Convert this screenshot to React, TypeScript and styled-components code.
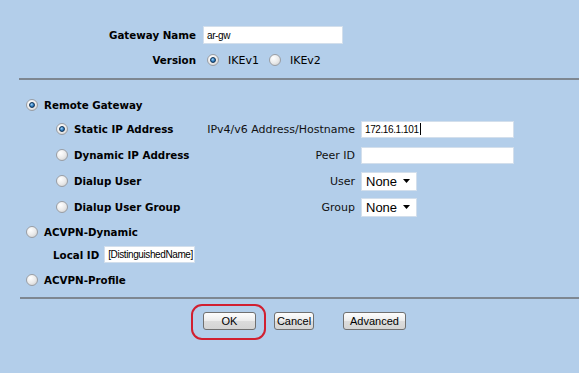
import React from 'react';
import styled, { createGlobalStyle } from 'styled-components';

const GlobalStyle = createGlobalStyle`
  body {
    margin: 0;
    background: #b3ceea;
    font-family: "DejaVu Sans", Verdana, sans-serif;
  }
`;

const Page = styled.div`
  width: 579px;
  height: 373px;
  box-sizing: border-box;
  padding-top: 26px;
  background: #b3ceea;
  color: #000;
  overflow: hidden;
`;

const HeaderGrid = styled.div`
  display: grid;
  grid-template-columns: 196px auto;
  grid-auto-rows: 18px;
  column-gap: 7px;
  row-gap: 7px;
  align-items: center;
`;

const Label = styled.span`
  font-size: 10.3px;
  font-weight: bold;
  white-space: nowrap;
  justify-self: end;
`;

const FieldLabel = styled.span`
  font-size: 11px;
  color: #111;
  white-space: nowrap;
  justify-self: end;
`;

const Field = styled.div<{ $width: number; $height?: number }>`
  width: ${(p) => p.$width}px;
  height: ${(p) => p.$height ?? 17}px;
  box-sizing: border-box;
  display: flex;
  align-items: center;
  padding: 0 3px;
  background: #fff;
  border: 1px solid #d3dfec;
  font-family: "Liberation Sans", Arial, sans-serif;
  font-size: 10px;
  letter-spacing: -0.4px;
  color: #000;
  white-space: nowrap;
`;

const Caret = styled.span`
  width: 1px;
  height: 12px;
  margin-left: 1px;
  background: #000;
`;

const Options = styled.div`
  display: flex;
  align-items: center;
  padding-left: 4px;
`;

const OptionText = styled.span`
  font-size: 11px;
  margin: 0 10px 0 9px;
`;

const Radio = styled.span<{ $checked?: boolean }>`
  position: relative;
  width: 12px;
  height: 12px;
  flex: none;
  box-sizing: border-box;
  border-radius: 50%;
  border: 1px solid #9a9ea4;
  background: radial-gradient(circle at 35% 30%, #ffffff 0%, #e9e9e9 55%, #c8c8c8 100%);

  &::after {
    content: '';
    display: ${(p) => (p.$checked ? 'block' : 'none')};
    position: absolute;
    left: 2px;
    top: 2px;
    width: 6px;
    height: 6px;
    box-sizing: border-box;
    border-radius: 50%;
    border: 1px solid #0e3358;
    background: radial-gradient(circle at 40% 35%, #9fd2f6 0%, #2f7cc0 55%, #154a7c 100%);
  }
`;

const Divider = styled.div<{ $top: number; $left: number }>`
  height: 2px;
  margin-top: ${(p) => p.$top}px;
  margin-left: ${(p) => p.$left}px;
  background: #7e8791;
`;

const Section = styled.div`
  padding-left: 26px;
`;

const RadioRow = styled.div<{ $top?: number }>`
  display: flex;
  align-items: center;
  gap: 6px;
  height: 22px;
  margin-top: ${(p) => p.$top ?? 0}px;
`;

const SubGrid = styled.div`
  display: grid;
  grid-template-columns: 12px 122px 153px auto;
  grid-auto-rows: 26px;
  column-gap: 6px;
  align-items: center;
  margin-left: 56px;
`;

const OptionLabel = styled(Label)`
  justify-self: start;
`;

const SelectBox = styled.div`
  width: 56px;
  height: 19px;
  box-sizing: border-box;
  display: flex;
  align-items: center;
  justify-content: space-between;
  padding: 0 6px 0 4px;
  background: #fff;
  border: 1px solid #d3dfec;
  font-family: "Liberation Sans", Arial, sans-serif;
  font-size: 13px;
  color: #000;
`;

const LocalIdRow = styled.div`
  display: flex;
  align-items: center;
  gap: 5px;
  margin-top: 3px;
  padding-left: 27px;
  height: 17px;
`;

const ButtonRow = styled.div`
  display: flex;
  align-items: center;
  gap: 18px;
  margin-top: 13px;
  padding-left: 203px;
`;

const ButtonWrap = styled.div<{ $offset?: number }>`
  position: relative;
  margin-left: ${(p) => p.$offset ?? 0}px;
`;

const Button = styled.button<{ $width: number }>`
  display: block;
  width: ${(p) => p.$width}px;
  height: 18px;
  padding: 0;
  border: 1px solid #707070;
  border-radius: 3px;
  background: linear-gradient(#fdfdfd 0%, #ececec 50%, #dcdcdc 51%, #d4d4d4 100%);
  font-family: "Liberation Sans", Arial, sans-serif;
  font-size: 11px;
  color: #000;
`;

const Highlight = styled.span`
  position: absolute;
  left: -12px;
  right: -10px;
  top: -8px;
  bottom: -10px;
  border: 2px solid #d11f30;
  border-radius: 11px;
  pointer-events: none;
`;

const Arrow = () => (
  <svg width="7" height="4" viewBox="0 0 7 4">
    <path d="M0 0h7L3.5 4z" fill="#000" />
  </svg>
);

const Select = ({ value }: { value: string }) => (
  <SelectBox>
    <span>{value}</span>
    <Arrow />
  </SelectBox>
);

const remoteRows = [
  { label: 'Static IP Address', checked: true, field: 'IPv4/v6 Address/Hostname', kind: 'ip' },
  { label: 'Dynamic IP Address', field: 'Peer ID', kind: 'text' },
  { label: 'Dialup User', field: 'User', kind: 'select' },
  { label: 'Dialup User Group', field: 'Group', kind: 'select' },
];

export default function App() {
  return (
    <>
      <GlobalStyle />
      <Page>
        <HeaderGrid>
          <Label>Gateway Name</Label>
          <Field $width={140} $height={18}>ar-gw</Field>
          <Label>Version</Label>
          <Options>
            <Radio $checked />
            <OptionText>IKEv1</OptionText>
            <Radio />
            <OptionText>IKEv2</OptionText>
          </Options>
        </HeaderGrid>

        <Divider $top={9} $left={19} />

        <Section>
          <RadioRow $top={14}>
            <Radio $checked />
            <Label>Remote Gateway</Label>
          </RadioRow>
        </Section>

        <SubGrid>
          {remoteRows.map((row) => (
            <React.Fragment key={row.label}>
              <Radio $checked={row.checked} />
              <OptionLabel>{row.label}</OptionLabel>
              <FieldLabel>{row.field}</FieldLabel>
              {row.kind === 'select' ? (
                <Select value="None" />
              ) : (
                <Field $width={153}>
                  {row.kind === 'ip' && (
                    <>
                      172.16.1.101
                      <Caret />
                    </>
                  )}
                </Field>
              )}
            </React.Fragment>
          ))}
        </SubGrid>

        <Section>
          <RadioRow $top={1}>
            <Radio />
            <Label>ACVPN-Dynamic</Label>
          </RadioRow>
          <LocalIdRow>
            <Label>Local ID</Label>
            <Field $width={91}>[DistinguishedName]</Field>
          </LocalIdRow>
          <RadioRow $top={6}>
            <Radio />
            <Label>ACVPN-Profile</Label>
          </RadioRow>
        </Section>

        <Divider $top={6} $left={20} />

        <ButtonRow>
          <ButtonWrap>
            <Button $width={53}>OK</Button>
            <Highlight />
          </ButtonWrap>
          <ButtonWrap>
            <Button $width={40}>Cancel</Button>
          </ButtonWrap>
          <ButtonWrap $offset={11}>
            <Button $width={63}>Advanced</Button>
          </ButtonWrap>
        </ButtonRow>
      </Page>
    </>
  );
}
